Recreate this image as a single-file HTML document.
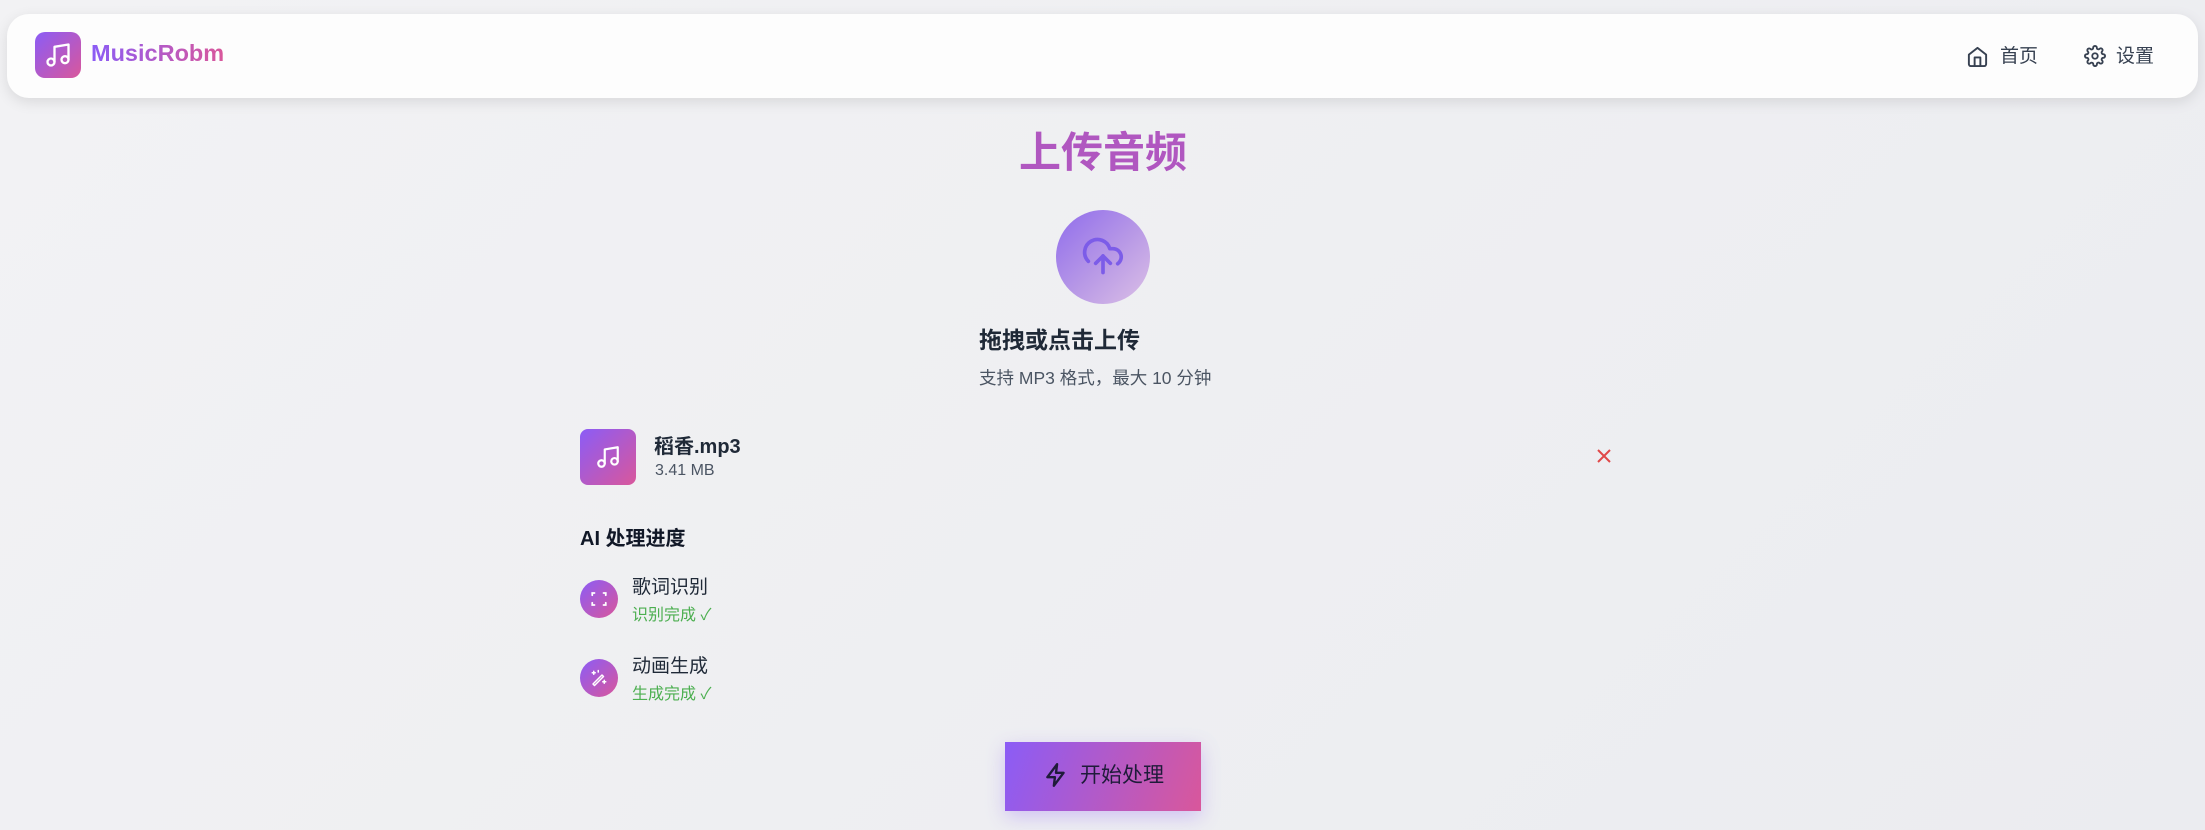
<!DOCTYPE html>
<html><head><meta charset="utf-8"><style>
*{margin:0;padding:0;box-sizing:border-box}
body{width:2205px;height:830px;overflow:hidden;position:relative;background:linear-gradient(135deg,#f2f2f4,#ebecf0);font-family:"Liberation Sans","Noto Sans CJK SC",sans-serif;}
.a{position:absolute;white-space:nowrap}
.hdr{position:absolute;left:7px;top:14px;width:2191px;height:84px;background:#fdfdfd;border-radius:22px;box-shadow:0 4px 14px rgba(0,0,0,.10)}
.grad{background:linear-gradient(135deg,#8b5cf6,#d9579b)}
</style></head><body>
<div class="hdr"></div>
<div class="a grad" style="left:35px;top:32px;width:46px;height:46px;border-radius:10px"></div>
<svg class="a" style="left:44px;top:41px" width="28" height="28" viewBox="0 0 24 24" fill="none" stroke="#fff" stroke-width="2" stroke-linecap="round" stroke-linejoin="round"><path d="M9 18V5l12-2v13"/><circle cx="6" cy="18" r="3"/><circle cx="18" cy="16" r="3"/></svg>
<div class="a" style="left:91px;top:40px;font-size:23.5px;font-weight:bold;background:linear-gradient(90deg,#8b5cf6,#d9579b);-webkit-background-clip:text;color:transparent">MusicRobm</div>
<svg class="a" style="left:1966px;top:45px" width="23" height="23" viewBox="0 0 24 24" fill="none" stroke="#374151" stroke-width="2" stroke-linecap="round" stroke-linejoin="round"><path d="M3 10l9-7 9 7v10a2 2 0 0 1-2 2H5a2 2 0 0 1-2-2z"/><path d="M9 22V13h6v9"/></svg>
<div class="a" style="left:2000px;top:41px;font-size:19px;color:#374151">首页</div>
<svg class="a" style="left:2084px;top:45px" width="22" height="22" viewBox="0 0 24 24" fill="none" stroke="#374151" stroke-width="2" stroke-linecap="round" stroke-linejoin="round"><circle cx="12" cy="12" r="3"/><path d="M19.4 15a1.65 1.65 0 0 0 .33 1.820l.06.06a2 2 0 1 1-2.83 2.830l-.06-.06a1.65 1.65 0 0 0-1.820-.33 1.65 1.65 0 0 0-1 1.510V21a2 2 0 0 1-4 0v-.09A1.65 1.65 0 0 0 9 19.4a1.65 1.65 0 0 0-1.820.33l-.06.06a2 2 0 1 1-2.830-2.830l.06-.06A1.65 1.65 0 0 0 4.68 15a1.65 1.65 0 0 0-1.510-1H3a2 2 0 0 1 0-4h.09A1.65 1.65 0 0 0 4.6 9a1.65 1.65 0 0 0-.33-1.820l-.06-.06a2 2 0 1 1 2.830-2.830l.06.06A1.65 1.65 0 0 0 9 4.68a1.65 1.65 0 0 0 1-1.510V3a2 2 0 0 1 4 0v.09a1.65 1.65 0 0 0 1 1.510 1.65 1.65 0 0 0 1.820-.33l.06-.06a2 2 0 1 1 2.830 2.830l-.06.06A1.65 1.65 0 0 0 19.4 9a1.65 1.65 0 0 0 1.510 1H21a2 2 0 0 1 0 4h-.09a1.65 1.65 0 0 0-1.510 1z"/></svg>
<div class="a" style="left:2116px;top:41px;font-size:19px;color:#374151">设置</div>

<div class="a" style="left:1019px;top:119px;font-size:42px;font-weight:bold;color:#b057c0">上传音频</div>
<div class="a" style="left:1056px;top:210px;width:94px;height:94px;border-radius:50%;background:linear-gradient(135deg,#8f6cec,#b99ae6 55%,#dcc0e6)"></div>
<svg class="a" style="left:1081px;top:234px" width="44" height="44" viewBox="0 0 24 24" fill="none" stroke="#7c5ce8" stroke-width="2" stroke-linecap="round" stroke-linejoin="round"><path d="M4 14.9A7 7 0 1 1 15.7 8h1.8a4.5 4.5 0 0 1 2.5 8.2"/><path d="M12 12v9"/><path d="M8 16l4-4 4 4"/></svg>
<div class="a" style="left:979px;top:321px;font-size:23px;font-weight:bold;color:#1f2937">拖拽或点击上传</div>
<div class="a" style="left:979px;top:365px;font-size:17.5px;color:#4b5563">支持 MP3 格式，最大 10 分钟</div>

<div class="a grad" style="left:580px;top:429px;width:56px;height:56px;border-radius:8px"></div>
<svg class="a" style="left:595px;top:444px" width="26" height="26" viewBox="0 0 24 24" fill="none" stroke="#fff" stroke-width="2" stroke-linecap="round" stroke-linejoin="round"><path d="M9 18V5l12-2v13"/><circle cx="6" cy="18" r="3"/><circle cx="18" cy="16" r="3"/></svg>
<div class="a" style="left:654px;top:430px;font-size:20px;font-weight:bold;color:#1f2937">稻香.mp3</div>
<div class="a" style="left:655px;top:462px;font-size:16px;color:#4b5563">3.41 MB</div>
<svg class="a" style="left:1596px;top:448px" width="16" height="16" viewBox="0 0 16 16" stroke="#e04848" stroke-width="2"><path d="M2 2l12 12M14 2L2 14"/></svg>

<div class="a" style="left:580px;top:522px;font-size:20px;font-weight:bold;color:#111827">AI 处理进度</div>
<div class="a grad" style="left:580px;top:580px;width:38px;height:38px;border-radius:50%"></div>
<svg class="a" style="left:590px;top:590px" width="18" height="18" viewBox="0 0 24 24" fill="none" stroke="#fff" stroke-width="2.4" stroke-linecap="round"><path d="M3 7V4h3M18 4h3v3M21 17v3h-3M6 20H3v-3"/></svg>
<div class="a" style="left:632px;top:572px;font-size:19px;color:#1f2937">歌词识别</div>
<div class="a" style="left:632px;top:601px;font-size:16px;color:#4caf50">识别完成 ✓</div>
<div class="a grad" style="left:580px;top:659px;width:38px;height:38px;border-radius:50%"></div>
<svg class="a" style="left:590px;top:669px" width="18" height="18" viewBox="0 0 24 24" fill="none" stroke="#fff" stroke-width="2" stroke-linecap="round" stroke-linejoin="round"><path d="M4 20l12-12 2 2-12 12z"/><path d="M5 3v4M3 5h4M19 15v4M17 17h4M11 2v2"/></svg>
<div class="a" style="left:632px;top:651px;font-size:19px;color:#1f2937">动画生成</div>
<div class="a" style="left:632px;top:680px;font-size:16px;color:#4caf50">生成完成 ✓</div>

<div class="a grad" style="left:1005px;top:742px;width:196px;height:69px;background:linear-gradient(110deg,#8b5cf6,#d9579b);box-shadow:0 6px 18px rgba(139,92,246,.3)"></div>
<svg class="a" style="left:1043px;top:762px" width="26" height="26" viewBox="0 0 24 24" fill="none" stroke="#1f1b3a" stroke-width="2.2" stroke-linejoin="round"><path d="M13 2L4 14h7l-1 8 9-12h-7z"/></svg>
<div class="a" style="left:1080px;top:759px;font-size:21px;color:#1f1b3a">开始处理</div>
</body></html>
